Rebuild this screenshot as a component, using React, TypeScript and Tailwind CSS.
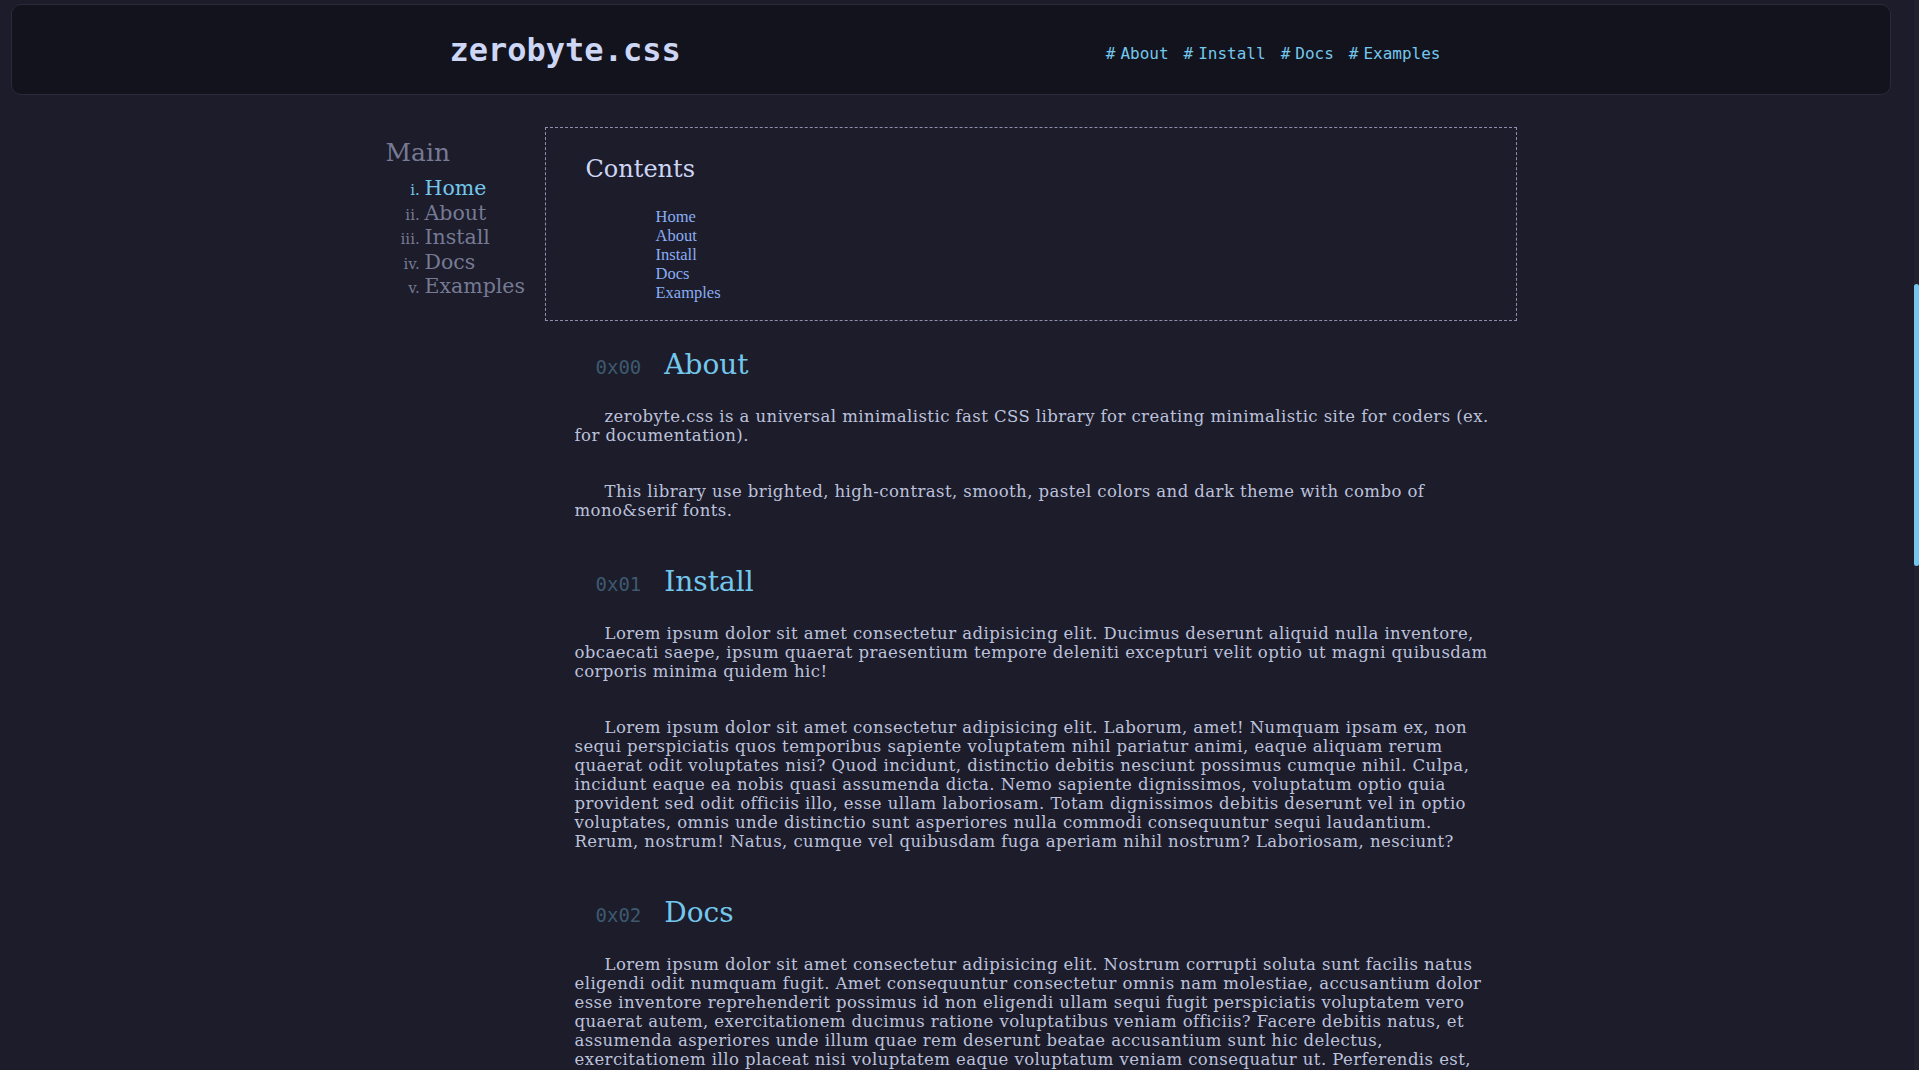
// Documentation landing page for zerobyte.css: header, side navigation and content sections.
import type { FC } from "react";

const navLinks = ["About", "Install", "Docs", "Examples"];
const sideLinks = ["Home", "About", "Install", "Docs", "Examples"];

interface Section {
  code: string;
  title: string;
  paragraphs: string[];
}

const sections: Section[] = [
  {
    code: "0x00",
    title: "About",
    paragraphs: [
      "zerobyte.css is a universal minimalistic fast CSS library for creating minimalistic site for coders (ex. for documentation).",
      "This library use brighted, high-contrast, smooth, pastel colors and dark theme with combo of mono&serif fonts.",
    ],
  },
  {
    code: "0x01",
    title: "Install",
    paragraphs: [
      "Lorem ipsum dolor sit amet consectetur adipisicing elit. Ducimus deserunt aliquid nulla inventore, obcaecati saepe, ipsum quaerat praesentium tempore deleniti excepturi velit optio ut magni quibusdam corporis minima quidem hic!",
      "Lorem ipsum dolor sit amet consectetur adipisicing elit. Laborum, amet! Numquam ipsam ex, non sequi perspiciatis quos temporibus sapiente voluptatem nihil pariatur animi, eaque aliquam rerum quaerat odit voluptates nisi? Quod incidunt, distinctio debitis nesciunt possimus cumque nihil. Culpa, incidunt eaque ea nobis quasi assumenda dicta. Nemo sapiente dignissimos, voluptatum optio quia provident sed odit officiis illo, esse ullam laboriosam. Totam dignissimos debitis deserunt vel in optio voluptates, omnis unde distinctio sunt asperiores nulla commodi consequuntur sequi laudantium. Rerum, nostrum! Natus, cumque vel quibusdam fuga aperiam nihil nostrum? Laboriosam, nesciunt?",
    ],
  },
  {
    code: "0x02",
    title: "Docs",
    paragraphs: [
      "Lorem ipsum dolor sit amet consectetur adipisicing elit. Nostrum corrupti soluta sunt facilis natus eligendi odit numquam fugit. Amet consequuntur consectetur omnis nam molestiae, accusantium dolor esse inventore reprehenderit possimus id non eligendi ullam sequi fugit perspiciatis voluptatem vero quaerat autem, exercitationem ducimus ratione voluptatibus veniam officiis? Facere debitis natus, et assumenda asperiores unde illum quae rem deserunt beatae accusantium sunt hic delectus, exercitationem illo placeat nisi voluptatem eaque voluptatum veniam consequatur ut. Perferendis est, quibusdam ipsa cumque repellendus nemo magnam.",
    ],
  },
  {
    code: "0x03",
    title: "Examples",
    paragraphs: [
      "Lorem ipsum dolor sit amet consectetur adipisicing elit. Quia, doloribus.",
    ],
  },
];

const Header: FC = () => (
  <header className="mx-[11px] mt-[4px] flex h-[91px] items-center justify-center rounded-[10px] border border-[#2a2a3b] bg-[#13131d] pr-[12px]">
    <div className="flex w-[991px] items-center justify-between">
      <h1 className="font-['DejaVu_Sans_Mono',monospace] text-[32px] font-bold text-[#cdd6f4]">
        zerobyte.css
      </h1>
      <nav className="flex gap-[15px] pt-[8px] font-['DejaVu_Sans_Mono',monospace] text-[16px] text-[#74c7ec]">
        {navLinks.map((link) => (
          <a key={link} href={`#${link.toLowerCase()}`} className="flex gap-[5px]">
            <span>#</span>
            <span>{link}</span>
          </a>
        ))}
      </nav>
    </div>
  </header>
);

const Sidebar: FC = () => (
  <aside className="w-[159px] shrink-0 font-['DejaVu_Serif',serif] text-[#767a94]">
    <h2 className="mt-[11px] text-[25px] leading-[30px]">Main</h2>
    <ol className="mt-[8px] list-[lower-roman] pl-[39px] text-[20.5px] leading-[24.5px] marker:text-[15px]">
      {sideLinks.map((link, i) => (
        <li key={link} className={i === 0 ? "text-[#74c7ec]" : ""}>
          {link}
        </li>
      ))}
    </ol>
  </aside>
);

const Contents: FC = () => (
  <div className="border border-dashed border-[#8b8fa8] pb-[18px] pl-[40px] pt-[27px]">
    <h2 className="font-['DejaVu_Serif',serif] text-[24px] leading-[29px] text-[#cdd6f4]">
      Contents
    </h2>
    <ul className="ml-[70px] mt-[23px] font-['Liberation_Serif',serif] text-[16.5px] leading-[19px] text-[#8aadf4]">
      {sideLinks.map((link) => (
        <li key={link}>{link}</li>
      ))}
    </ul>
  </div>
);

const SectionBlock: FC<Section> = ({ code, title, paragraphs }) => (
  <section>
    <h2 className="flex items-baseline gap-[23px] pl-[51px] leading-[34px]">
      <span className="font-['DejaVu_Sans_Mono',monospace] text-[19px] text-[#3d5a70]">{code}</span>
      <span className="font-['DejaVu_Serif',serif] text-[28px] text-[#74c7ec]">{title}</span>
    </h2>
    <div className="mt-[23px] flex flex-col gap-[37px]">
      {paragraphs.map((p, i) => (
        <p
          key={i}
          className="pl-[30px] pr-[16px] indent-[30px] font-['DejaVu_Serif',serif] text-[16.5px] leading-[19px] tracking-[0.43px] text-[#bcc2dc]"
        >
          {p}
        </p>
      ))}
    </div>
  </section>
);

const App: FC = () => (
  <div className="flex h-screen overflow-hidden bg-[#1c1c2a]">
    <div className="min-w-0 flex-1">
      <Header />
      <div className="mx-auto mt-[32px] flex w-[1131px]">
        <Sidebar />
        <main className="w-[972px] shrink-0">
          <Contents />
          <div className="mt-[27px] flex flex-col gap-[45px]">
            {sections.map((s) => (
              <SectionBlock key={s.code} {...s} />
            ))}
          </div>
        </main>
      </div>
    </div>
    <div className="flex w-[17px] shrink-0 justify-end">
      <div className="h-full w-[5px] bg-[#212130] pt-[284px]">
        <div className="h-[282px] rounded-full bg-[#74c7ec]" />
      </div>
    </div>
  </div>
);

export default App;
